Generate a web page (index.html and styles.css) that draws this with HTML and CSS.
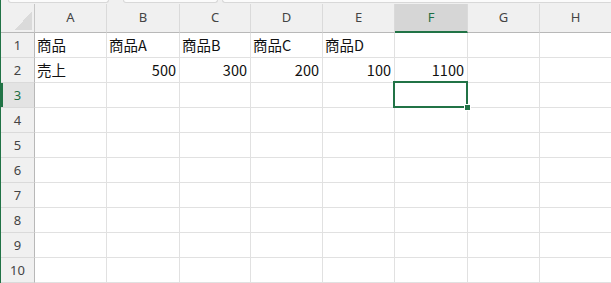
FILE: index.html
```html
<!DOCTYPE html>
<html lang="ja">

<head>
    <meta charset="UTF-8">
    <title>Sheet1</title>
    <link rel="stylesheet" href="styles.css">
</head>

<body>
    <div class="app">
        <div class="top-strip">
            <div class="box name-box"></div>
            <div class="box tool-box"></div>
            <div class="box formula-box"></div>
        </div>

        <div class="sheet head-rows">
            <!-- column headers -->
            <div class="corner"></div>
            <div class="col-head">A</div>
            <div class="col-head">B</div>
            <div class="col-head">C</div>
            <div class="col-head">D</div>
            <div class="col-head">E</div>
            <div class="col-head active">F</div>
            <div class="col-head">G</div>
            <div class="col-head">H</div>

            <!-- row 1 -->
            <div class="row-head">1</div>
            <div class="cell">商品</div>
            <div class="cell">商品A</div>
            <div class="cell">商品B</div>
            <div class="cell">商品C</div>
            <div class="cell">商品D</div>
            <div class="cell"></div>
            <div class="cell"></div>
            <div class="cell"></div>

            <!-- row 2 -->
            <div class="row-head">2</div>
            <div class="cell">売上</div>
            <div class="cell num">500</div>
            <div class="cell num">300</div>
            <div class="cell num">200</div>
            <div class="cell num">100</div>
            <div class="cell num">1100</div>
            <div class="cell"></div>
            <div class="cell"></div>

            <!-- row 3 -->
            <div class="row-head active">3</div>
            <div class="cell"></div>
            <div class="cell"></div>
            <div class="cell"></div>
            <div class="cell"></div>
            <div class="cell"></div>
            <div class="cell selected"><span class="sel-frame"></span><span class="fill-handle"></span></div>
            <div class="cell"></div>
            <div class="cell"></div>
        </div>
        <div class="sheet" id="empty-rows"></div>
    </div>

    <script>
        // rows 4..10 are empty, build them instead of typing them out
        const rows = document.getElementById('empty-rows');
        for (let r = 4; r <= 10; r++) {
            const head = document.createElement('div');
            head.className = 'row-head';
            head.textContent = r;
            rows.appendChild(head);
            for (let c = 0; c < 8; c++) {
                const cell = document.createElement('div');
                cell.className = 'cell';
                rows.appendChild(cell);
            }
        }
    </script>
</body>

</html>
```

FILE: styles.css
```css
/* General Reset */
* {
    margin: 0;
    padding: 0;
    box-sizing: border-box;
}

body {
    width: 611px;
    height: 283px;
    overflow: hidden;
    background-color: #fff;
    font-family: "Noto Sans CJK JP", "Noto Sans", sans-serif;
    color: #111;
}

.app {
    border-left: 1px solid #217346;
    background-color: #f0f0f0;
    width: 612px;
}

/* bottom edge of the boxes above the grid */
.top-strip {
    display: flex;
    height: 4px;
    padding-left: 7px;
    gap: 10px;
    background-color: #f0f0f0;
}

.box {
    height: 3px;
    background-color: #fbfbfb;
    border: 1px solid #d8d8d8;
    border-top: none;
    border-radius: 0 0 5px 5px;
}

.name-box {
    width: 101px;
}

.tool-box {
    width: 95px;
    margin-left: 4px;
}

.formula-box {
    flex: 1;
    margin-left: -6px;
    border-right: none;
}

.sheet {
    display: grid;
    grid-template-columns: 34px 72px 73px 71px 72px 72px 73px 72px 72px;
    grid-auto-rows: 25px;
    background-color: #fff;
}

.sheet.head-rows {
    grid-template-rows: 29px;
}

.corner {
    background-color: #f0f0f0;
    border-right: 1px solid #c6c6c6;
    border-bottom: 1px solid #b8b8b8;
    background-image: linear-gradient(to bottom right, transparent 50%, #dadada 50%);
    background-size: 17px 19px;
    background-position: right 2px bottom 2px;
    background-repeat: no-repeat;
}

.col-head {
    display: flex;
    align-items: center;
    justify-content: center;
    padding-bottom: 2px;
    background-color: #f0f0f0;
    border-right: 1px solid #dadada;
    border-bottom: 1px solid #b8b8b8;
    font-family: "Noto Sans", sans-serif;
    font-size: 13px;
    color: #444;
}

.col-head.active {
    background-color: #d6d6d6;
    color: #1e6e43;
    border-bottom: 2px solid #217346;
    padding-bottom: 1px;
}

.row-head {
    display: flex;
    align-items: center;
    justify-content: center;
    background-color: #f0f0f0;
    border-right: 1px solid #b8b8b8;
    border-bottom: 1px solid #dadada;
    font-family: "Noto Sans", sans-serif;
    font-size: 13px;
    color: #444;
}

.row-head.active {
    background-color: #e3e3e3;
    color: #1e6e43;
    box-shadow: inset 2px 0 0 #217346;
}

.cell {
    position: relative;
    display: flex;
    align-items: center;
    padding: 0 3px 0 2px;
    border-right: 1px solid #e1e1e1;
    border-bottom: 1px solid #e1e1e1;
    font-size: 14.5px;
    line-height: 1;
    white-space: nowrap;
}

.cell.num {
    justify-content: flex-end;
}

/* active cell outline sits over the grid lines */
.sel-frame {
    position: absolute;
    top: -2px;
    left: -2px;
    right: -1px;
    bottom: -1px;
    border: 2px solid #217346;
}

.fill-handle {
    position: absolute;
    right: -4px;
    bottom: -4px;
    width: 7px;
    height: 7px;
    background-color: #217346;
    border: 1px solid #fff;
    z-index: 1;
}
```
